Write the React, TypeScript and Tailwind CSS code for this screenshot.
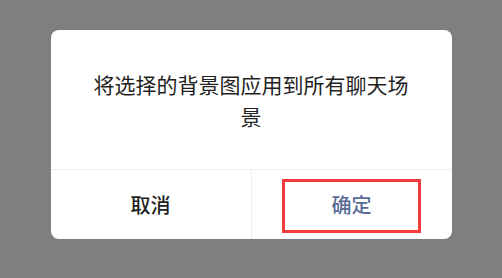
export default function App() {
  return (
    <div
      className="flex h-[278px] w-[502px] justify-center bg-[#7f7f7f] pt-[30px]"
      style={{ fontFamily: '"Noto Sans CJK SC", "Noto Sans", sans-serif' }}
    >
      <div className="flex h-[209px] w-[401px] flex-col overflow-hidden rounded-[8px] bg-white">
        {/* Message */}
        <div className="flex h-[140px] items-center justify-center border-b border-[#ededed] px-[40px]">
          <p className="text-center text-[21px] leading-[32px] text-[#1f1f1f]">
            将选择的背景图应用到所有聊天场景
          </p>
        </div>

        {/* Actions */}
        <div className="flex flex-1">
          <button className="flex flex-1 items-center justify-center border-r border-[#ededed] text-[20px] font-medium text-[#1f1f1f]">
            取消
          </button>
          <button className="relative flex flex-1 items-center justify-center text-[20px] font-medium text-[#576b95]">
            确定
            <span className="pointer-events-none absolute bottom-[6px] left-[30px] right-[31px] top-[9px] border-[3px] border-[#f23c3c]" />
          </button>
        </div>
      </div>
    </div>
  );
}
